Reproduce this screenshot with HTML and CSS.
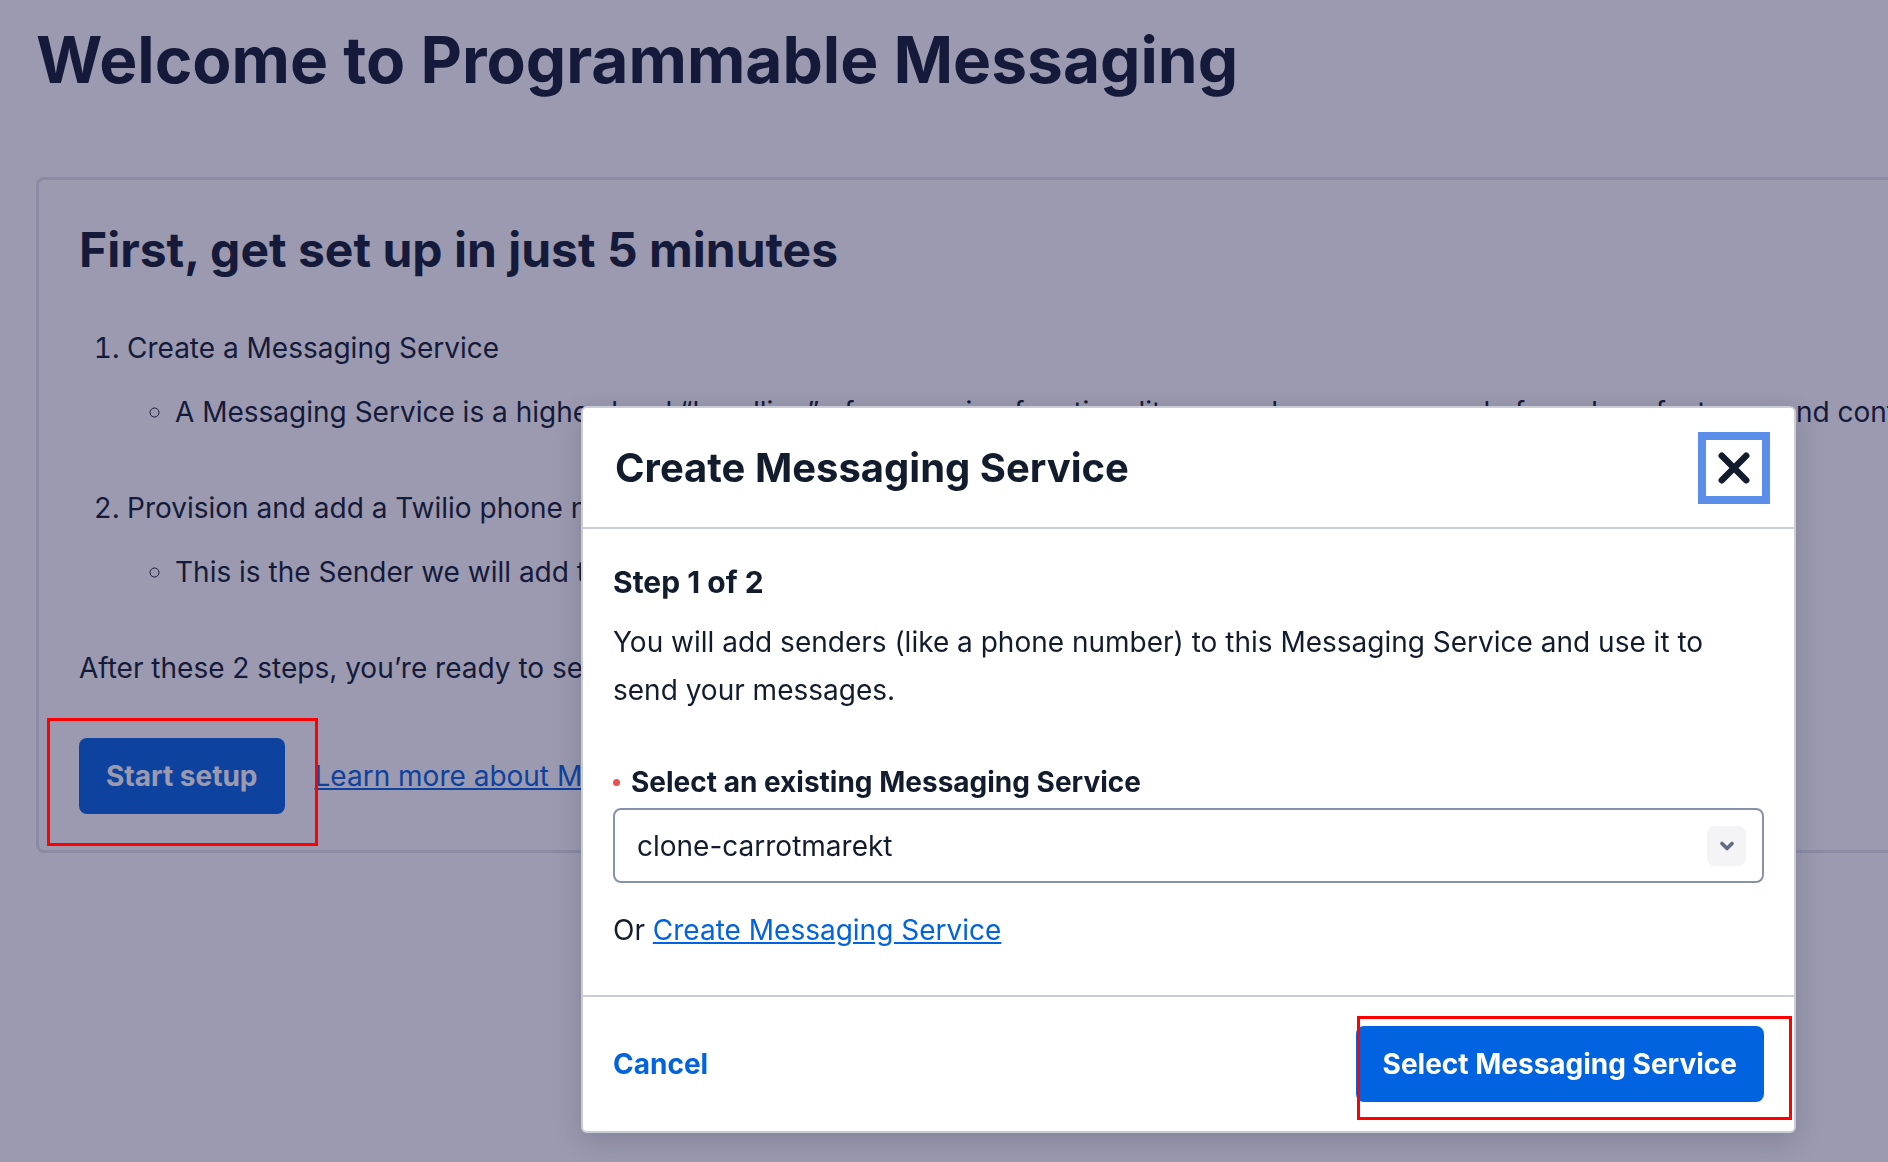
FILE: index.html
```html
<!DOCTYPE html>
<html lang="en">
<head>
<meta charset="utf-8">
<title>Programmable Messaging</title>
<link rel="stylesheet" href="styles.css">
</head>
<body>
<main class="page">
  <h1 class="page-title">Welcome to Programmable Messaging</h1>
  <section class="card">
    <h2 class="card-title">First, get set up in just 5 minutes</h2>
    <ol class="steps">
      <li>Create a Messaging Service
        <ul class="sub">
          <li>A Messaging Service is a higher-level “bundling” of messaging functionality around a common pool of senders, features, and configuration.</li>
        </ul>
      </li>
      <li>Provision and add a Twilio phone number to your Messaging Service
        <ul class="sub">
          <li>This is the Sender we will add to your Messaging Service to send your messages.</li>
        </ul>
      </li>
    </ol>
    <p class="after">After these 2 steps, you’re ready to send your first message with Programmable Messaging.</p>
    <div class="actions">
      <button class="btn btn-primary" type="button">Start setup</button>
      <a class="link" href="#">Learn more about Messaging Services</a>
    </div>
  </section>
</main>

<div class="overlay"></div>
<div class="annot annot-start"></div>

<div class="modal" role="dialog">
  <header class="modal-header">
    <h2 class="modal-title">Create Messaging Service</h2>
    <button class="close" type="button" aria-label="Close">
      <svg width="56" height="56" viewBox="0 0 56 56" aria-hidden="true"><path d="M15.8 15.8 L40.2 40.2 M40.2 15.8 L15.8 40.2" fill="none" stroke="#121c2d" stroke-width="6.5" stroke-linecap="round"/></svg>
    </button>
  </header>
  <div class="modal-body">
    <h3 class="step">Step 1 of 2</h3>
    <p class="modal-text">You will add senders (like a phone number) to this Messaging Service and use it to send your messages.</p>
    <div class="label"><span class="dot"></span>Select an existing Messaging Service</div>
    <div class="select">
      <span>clone-carrotmarekt</span>
      <span class="chev"><svg width="16" height="10" viewBox="0 0 16 10" aria-hidden="true"><path d="M3 2.5 L8 7.5 L13 2.5" fill="none" stroke="#606b85" stroke-width="3.6" stroke-linecap="round" stroke-linejoin="round"/></svg></span>
    </div>
    <p class="or">Or <a class="modal-link" href="#">Create Messaging Service</a></p>
  </div>
  <footer class="modal-footer">
    <button class="cancel" type="button">Cancel</button>
    <button class="btn btn-primary" type="button">Select Messaging Service</button>
  </footer>
</div>
<div class="annot annot-select"></div>
</body>
</html>
```
FILE: styles.css
```css
html, body {
  margin: 0;
}
body {
  width: 1888px;
  height: 1162px;
  overflow: hidden;
  position: relative;
  background: #ffffff;
  color: #121c2d;
  font-family: Inter, "Noto Sans", sans-serif;
}
.page {
  padding: 20px 0 0 36px;
}
.page-title {
  margin: 0 0 77px;
  font-size: 64px;
  line-height: 80px;
  font-weight: 700;
  white-space: nowrap;
}
.card {
  width: 2400px;
  border: 3px solid #e1e3ea;
  border-radius: 8px;
  padding: 40px 40px 36px 40px;
}
.card-title {
  margin: 0;
  font-size: 48px;
  line-height: 60px;
  font-weight: 700;
  white-space: nowrap;
}
.steps {
  margin: 44px 0 0;
  padding-left: 48px;
  font-size: 28px;
  line-height: 48px;
  white-space: nowrap;
}
.steps > li + li {
  margin-top: 48px;
}
.sub {
  margin: 16px 0 0;
  padding-left: 48px;
  list-style: circle;
}
.after {
  margin: 48px 0 0;
  font-size: 28px;
  line-height: 48px;
  white-space: nowrap;
}
.actions {
  margin-top: 46px;
  display: flex;
  align-items: center;
  gap: 30px;
}
.btn {
  height: 76px;
  padding: 0 27px;
  border: 0;
  border-radius: 8px;
  font-family: Inter, "Noto Sans", sans-serif;
  font-size: 28px;
  line-height: 48px;
  font-weight: 700;
  display: inline-flex;
  align-items: center;
  white-space: nowrap;
}
.btn-primary {
  background: #0263e0;
  color: #ffffff;
}
.link {
  font-size: 28px;
  line-height: 48px;
  color: #0263e0;
  text-decoration: underline;
  white-space: nowrap;
}
.overlay {
  position: fixed;
  inset: 0;
  background: rgba(27, 25, 75, 0.44);
}
.annot {
  position: absolute;
  box-sizing: border-box;
  border: 3px solid #ff0000;
}
.annot-start {
  left: 47px;
  top: 718px;
  width: 271px;
  height: 128px;
}
.annot-select {
  left: 1357px;
  top: 1016px;
  width: 435px;
  height: 104px;
}
.modal {
  position: absolute;
  left: 581px;
  top: 406px;
  width: 1215px;
  box-sizing: border-box;
  background: #ffffff;
  border: 2px solid #cacdd8;
  border-radius: 6px;
  box-shadow: 0 8px 28px rgba(18, 28, 45, 0.18);
}
.modal-header {
  display: flex;
  align-items: center;
  justify-content: space-between;
  padding: 32px 32px 31px;
  border-bottom: 2px solid #cacdd8;
}
.modal-title {
  margin: 0;
  font-size: 40px;
  line-height: 48px;
  font-weight: 700;
}
.close {
  width: 56px;
  height: 56px;
  padding: 0;
  border: 0;
  background: #ffffff;
  box-shadow: 0 0 0 8px #5b8ee8;
  display: flex;
  align-items: center;
  justify-content: center;
}
.modal-body {
  padding: 33px 30px 41px;
  border-bottom: 2px solid #cacdd8;
}
.step {
  margin: 0 0 16px;
  font-size: 30px;
  line-height: 40px;
  font-weight: 700;
}
.modal-text {
  margin: 0 0 48px;
  font-size: 28px;
  line-height: 48px;
  max-width: 1120px;
}
.label {
  display: flex;
  align-items: center;
  font-size: 28px;
  line-height: 40px;
  font-weight: 700;
  margin-bottom: 6px;
}
.dot {
  width: 7px;
  height: 7px;
  border-radius: 50%;
  background: #e94f54;
  margin-right: 11px;
}
.select {
  height: 75px;
  box-sizing: border-box;
  border: 2px solid #8891aa;
  border-radius: 8px;
  display: flex;
  align-items: center;
  justify-content: space-between;
  padding: 0 16px 0 22px;
  font-size: 28px;
  line-height: 48px;
}
.chev {
  width: 39px;
  height: 40px;
  border-radius: 8px;
  background: #f4f4f6;
  display: flex;
  align-items: center;
  justify-content: center;
}
.or {
  margin: 23px 0 0;
  font-size: 28px;
  line-height: 48px;
}
.modal-link {
  color: #0263e0;
  text-decoration: underline;
}
.modal-footer {
  display: flex;
  align-items: center;
  justify-content: space-between;
  padding: 29px 30px;
}
.cancel {
  padding: 0;
  border: 0;
  background: none;
  color: #0263e0;
  font-family: Inter, "Noto Sans", sans-serif;
  font-size: 28px;
  line-height: 48px;
  font-weight: 700;
}
```
